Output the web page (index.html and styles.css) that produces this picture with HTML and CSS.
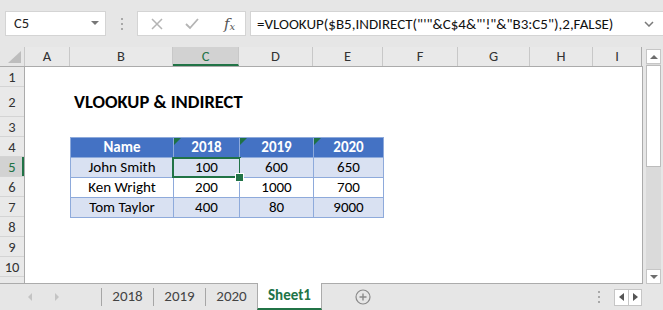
FILE: index.html
```html
<!DOCTYPE html>
<html lang="en">
<head>
  <meta charset="UTF-8" />
  <title>VLOOKUP &amp; INDIRECT</title>
  <link rel="stylesheet" href="styles.css">
</head>
<body>
  <div class="formula-bar">
    <div class="name-box">C5<span class="caret"></span></div>
    <div class="grip"><i></i><i></i><i></i></div>
    <div class="fx-box">
      <svg class="ico" width="14" height="14" viewBox="0 0 14 14"><path d="M2 2 L12 12 M12 2 L2 12" stroke="#b4b4b4" stroke-width="1.5" fill="none"/></svg>
      <svg class="ico" width="16" height="14" viewBox="0 0 16 14"><path d="M2 7 L6 11 L14 2" stroke="#b4b4b4" stroke-width="1.8" fill="none"/></svg>
      <span class="fx">f<sub>x</sub></span>
    </div>
    <div class="formula">
      <span>=VLOOKUP($B5,INDIRECT("'"&amp;C$4&amp;"'!"&amp;"B3:C5"),2,FALSE)</span>
      <svg width="10" height="6" viewBox="0 0 10 6"><path d="M1 1 L5 5 L9 1" stroke="#7a7a7a" stroke-width="1.5" fill="none"/></svg>
    </div>
  </div>

  <div class="main">
    <div class="grid">
      <div class="col-heads">
        <div class="corner"><svg width="25" height="20" viewBox="0 0 25 20"><path d="M8 16 L21 16 L21 4 Z" fill="#bdbdbd"/></svg></div>
        <div class="ch c-a">A</div>
        <div class="ch c-b">B</div>
        <div class="ch c-c active">C</div>
        <div class="ch c-d">D</div>
        <div class="ch c-e">E</div>
        <div class="ch c-f">F</div>
        <div class="ch c-g">G</div>
        <div class="ch c-h">H</div>
        <div class="ch c-i">I</div>
      </div>
      <div class="body">
        <div class="row-heads">
          <div class="rh">1</div>
          <div class="rh tall">2</div>
          <div class="rh">3</div>
          <div class="rh">4</div>
          <div class="rh active">5</div>
          <div class="rh">6</div>
          <div class="rh">7</div>
          <div class="rh">8</div>
          <div class="rh">9</div>
          <div class="rh">10</div>
          <div class="rh">11</div>
        </div>
        <div class="cells">
          <div class="title">VLOOKUP &amp; INDIRECT</div>
          <div class="data">
            <div class="hd">Name</div>
            <div class="hd flag">2018</div>
            <div class="hd flag">2019</div>
            <div class="hd flag">2020</div>

            <div class="band">John Smith</div>
            <div class="band sel">100</div>
            <div class="band">600</div>
            <div class="band">650</div>

            <div>Ken Wright</div>
            <div>200</div>
            <div>1000</div>
            <div>700</div>

            <div class="band">Tom Taylor</div>
            <div class="band">400</div>
            <div class="band">80</div>
            <div class="band">9000</div>
          </div>
        </div>
      </div>
    </div>
    <div class="vscroll">
      <div class="sbtn"><span class="tri-up"></span></div>
      <div class="track"><div class="thumb"></div></div>
      <div class="sbtn"><span class="tri-down"></span></div>
    </div>
  </div>

  <div class="tabs">
    <div class="tab-nav">
      <span class="nav-left"></span>
      <span class="nav-right"></span>
    </div>
    <div class="sep"></div>
    <div class="tab">2018</div>
    <div class="sep"></div>
    <div class="tab">2019</div>
    <div class="sep"></div>
    <div class="tab">2020</div>
    <div class="tab current">Sheet1</div>
    <svg class="add" width="16" height="16" viewBox="0 0 16 16"><circle cx="8" cy="8" r="7" stroke="#8a8a8a" stroke-width="1.2" fill="none"/><path d="M8 4.5 V11.5 M4.5 8 H11.5" stroke="#8a8a8a" stroke-width="1.4"/></svg>
    <div class="tab-tools">
      <div class="grip small"><i></i><i></i><i></i></div>
      <div class="hscroll">
        <div class="hbtn"><span class="arr-left"></span></div>
        <div class="hbtn"><span class="arr-right"></span></div>
      </div>
    </div>
  </div>
</body>
</html>
```

FILE: styles.css
```css
* { box-sizing: border-box; }
body { margin: 0; width: 663px; height: 310px; overflow: hidden; background: #e6e6e6; font-family: "Carlito", "Lato", sans-serif; color: #222; }

/* formula bar */
.formula-bar { height: 47px; display: flex; align-items: flex-start; padding-top: 11px; padding-left: 5px; }
.name-box { width: 101px; height: 25px; background: #fff; border: 1px solid #d4d4d4; padding-left: 8px; font-size: 14.5px; line-height: 23px; position: relative; }
.caret { position: absolute; right: 6px; top: 9px; border-left: 4px solid transparent; border-right: 4px solid transparent; border-top: 4px solid #777; }
.grip { width: 31px; height: 25px; display: flex; flex-direction: column; align-items: center; justify-content: center; gap: 3px; }
.grip i { display: block; width: 2px; height: 2px; background: #a8a8a8; }
.fx-box { width: 109px; height: 25px; background: #fff; border: 1px solid #d4d4d4; display: flex; align-items: center; padding-left: 12px; gap: 20px; }
.fx { font-family: "DejaVu Serif", serif; font-style: italic; font-size: 15px; color: #555; margin-left: 4px; }
.fx sub { font-size: 10px; vertical-align: -1px; }
.formula { flex: 1; height: 25px; margin-left: 4px; background: #fff; border: 1px solid #d4d4d4; border-right: none; display: flex; align-items: center; justify-content: space-between; padding: 0 9px 0 6px; font-size: 15px; color: #111; white-space: nowrap; }

/* grid */
.main { display: flex; height: 237px; }
.grid { width: 643px; overflow: hidden; border-bottom: 1px solid #ababab; }
.col-heads { display: flex; height: 20px; border-bottom: 1px solid #ababab; }
.corner { width: 25px; border-right: 1px solid #c8c8c8; }
.corner svg { display: block; }
.ch { text-align: center; font-size: 14.5px; line-height: 19px; color: #333; border-right: 1px solid #c8c8c8; background: #e9e9e9; }
.ch.active { background: #d2d2d2; color: #217346; border-bottom: 2px solid #217346; }
.c-a { width: 45px; }
.c-b { width: 103px; }
.c-c { width: 66px; }
.c-d { width: 74px; }
.c-e { width: 70px; }
.c-f { width: 75px; }
.c-g { width: 72px; }
.c-h { width: 63px; }
.c-i { width: 49px; border-right: 1px solid #ababab; }

.body { display: flex; }
.row-heads { width: 25px; flex-shrink: 0; background: #e9e9e9; border-right: 1px solid #ababab; }
.rh { height: 20px; border-bottom: 1px solid #d4d4d4; text-align: center; font-size: 14.5px; line-height: 20px; color: #333; }
.rh.tall { height: 30px; line-height: 30px; }
.rh.active { background: #d2d2d2; color: #217346; box-shadow: inset -2px 0 0 #217346; }

.cells { width: 618px; height: 216px; background: #fff; border-right: 1px solid #ababab; padding-top: 20px; }
.title { height: 30px; line-height: 30px; padding-left: 49px; font-weight: bold; font-size: 18.5px; color: #000; }
.data { margin: 20px 0 0 45px; display: grid; grid-template-columns: 103px 66px 74px 70px; grid-auto-rows: 20px; border-left: 1px solid #8eaadb; border-top: 1px solid #8eaadb; width: max-content; }
.data div { border-right: 1px solid #8eaadb; border-bottom: 1px solid #8eaadb; text-align: center; font-size: 15px; line-height: 19px; color: #000; position: relative; }
.data .hd { background: #4472c4; color: #fff; font-weight: bold; }
.data .band { background: #d9e1f2; }
.data .flag::before { content: ""; position: absolute; top: 0; left: 0; border-top: 7px solid #1e7145; border-right: 7px solid transparent; }
.data .sel::after { content: ""; position: absolute; top: -1px; left: -2px; right: -2px; bottom: -1px; border: 2px solid #217346; }
.data .sel::before { content: ""; position: absolute; right: -5px; bottom: -5px; width: 7px; height: 7px; background: #217346; border: 1px solid #fff; z-index: 2; }

/* vertical scrollbar */
.vscroll { width: 20px; padding: 2px 2px 0 3px; display: flex; flex-direction: column; }
.sbtn { height: 15px; background: #fff; border: 1px solid #c6c6c6; display: flex; align-items: center; justify-content: center; }
.tri-up { border-left: 4px solid transparent; border-right: 4px solid transparent; border-bottom: 4px solid #6e6e6e; }
.tri-down { border-left: 4px solid transparent; border-right: 4px solid transparent; border-top: 4px solid #6e6e6e; }
.track { flex: 1; background: #dadada; padding-top: 1px; }
.thumb { height: 102px; background: #fff; border: 1px solid #bcbcbc; }

/* sheet tabs */
.tabs { height: 26px; display: flex; align-items: stretch; font-size: 15px; color: #444; }
.tab-nav { width: 101px; display: flex; align-items: center; padding-left: 28px; gap: 23px; }
.nav-left { border-top: 4px solid transparent; border-bottom: 4px solid transparent; border-right: 4px solid #c4c4c4; }
.nav-right { border-top: 4px solid transparent; border-bottom: 4px solid transparent; border-left: 4px solid #c4c4c4; }
.sep { width: 1px; background: #a6a6a6; margin: 4px 0 4px; }
.tab { width: 51px; text-align: center; line-height: 24px; }
.tab.current { width: 65px; background: #fff; color: #217346; font-weight: bold; border-left: 1px solid #ababab; border-right: 1px solid #ababab; border-bottom: 2px solid #217346; margin-top: -1px; line-height: 25px; }
.add { margin: 5px 0 0 33px; }
.tab-tools { margin-left: auto; display: flex; align-items: center; padding-right: 21px; }
.grip.small { width: 30px; height: 18px; gap: 3px; }
.hscroll { display: flex; height: 17px; border: 1px solid #c6c6c6; background: #fff; }
.hbtn { width: 13px; display: flex; align-items: center; justify-content: center; }
.hbtn + .hbtn { border-left: 1px solid #c6c6c6; }
.arr-left { border-top: 4px solid transparent; border-bottom: 4px solid transparent; border-right: 5px solid #555; }
.arr-right { border-top: 4px solid transparent; border-bottom: 4px solid transparent; border-left: 5px solid #555; }
```
